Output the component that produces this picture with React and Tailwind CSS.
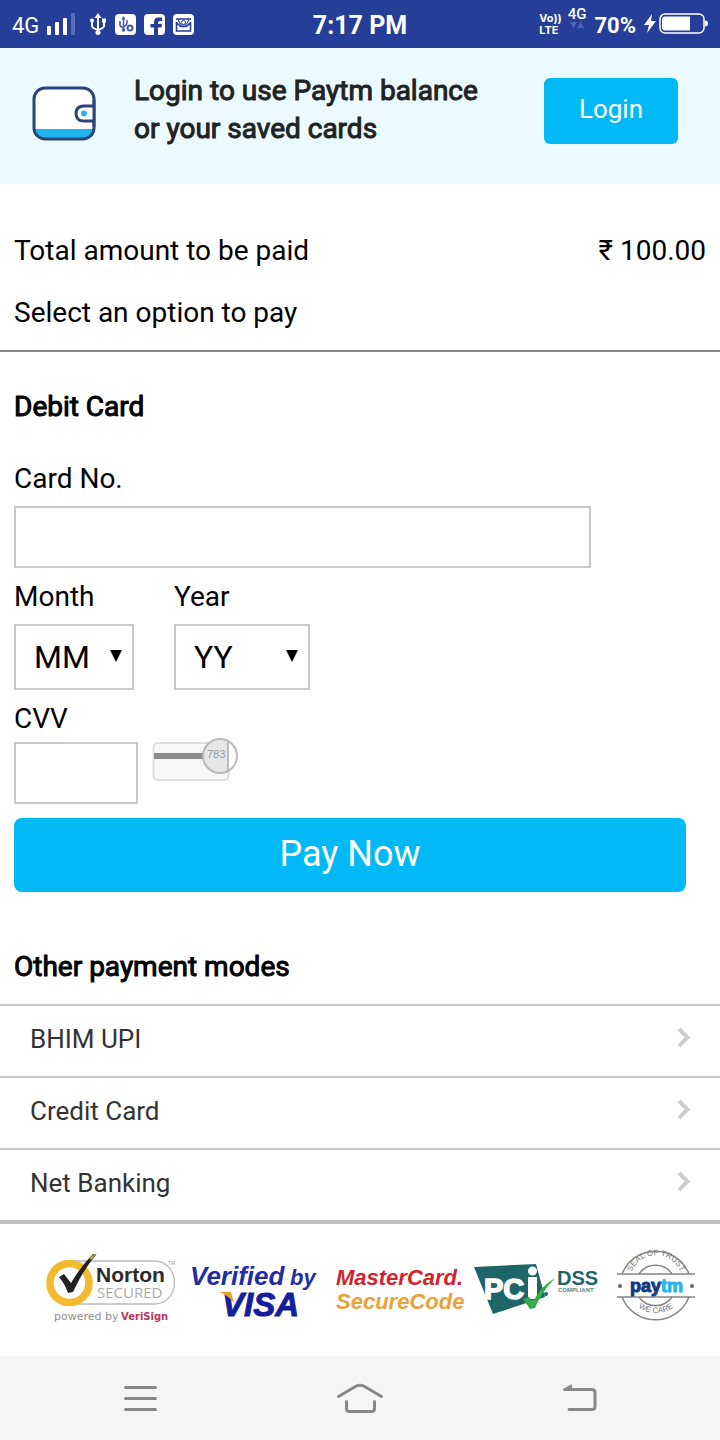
const paymentModes = ["BHIM UPI", "Credit Card", "Net Banking"];
const months = ["01", "02", "03", "04", "05", "06", "07", "08", "09", "10", "11", "12"];
const years = ["19", "20", "21", "22", "23", "24", "25", "26", "27", "28"];

function UsbIcon() {
  return (
    <svg width="18" height="22" viewBox="0 0 18 22" fill="none" stroke="#fff" strokeWidth="2" aria-hidden="true">
      <path d="M9 4v15M3 9v4q0 2 6 4M15 8v5q0 2-6 4" />
      <path d="M9 0l3.500 5h-7z" fill="#fff" stroke="none" />
      <circle cx="3" cy="7.500" r="2" fill="#fff" stroke="none" />
      <path d="M13 5.500h4v4h-4z" fill="#fff" stroke="none" />
      <circle cx="9" cy="19.500" r="2.500" fill="#fff" stroke="none" />
    </svg>
  );
}

function StatusBar() {
  return (
    <header className="grid h-12 grid-cols-[1fr_auto_1fr] items-center bg-[#263e98] text-white">
      <div className="flex items-center pl-3">
        <span className="pt-1 text-[22px] leading-6">4G</span>
        <svg className="ml-2" width="28" height="24" viewBox="0 0 28 24" fill="#fff" aria-hidden="true">
          <rect x="0" y="14" width="4" height="9" rx="1" />
          <rect x="8" y="10" width="4" height="13" rx="1" />
          <rect x="16" y="6" width="4" height="17" rx="1" />
          <rect x="24" y="1" width="4" height="22" rx="1" fill="#5a6cb4" />
        </svg>
        <div className="ml-3.5 flex items-center gap-2">
          <UsbIcon />
          <svg width="21" height="21" viewBox="0 0 21 21" aria-hidden="true">
            <rect width="21" height="21" rx="4" fill="#fff" />
            <g fill="none" stroke="#4a5ba8" strokeWidth="1.500">
              <path d="M8.500 4v12M5 7v4q0 2 3.500 2.500M12 6v3q0 2-3.500 4" />
              <circle cx="15" cy="14" r="2.500" strokeWidth="2" />
            </g>
            <path d="M8.500 2l2.200 3.500h-4.400z" fill="#4a5ba8" />
            <circle cx="8.500" cy="16" r="1.800" fill="#4a5ba8" />
          </svg>
          <svg width="21" height="21" viewBox="0 0 21 21" aria-hidden="true">
            <rect width="21" height="21" rx="4" fill="#fff" />
            <path d="M10 21v-7.500H6.500V10H10V8Q10 3.500 14.500 3.500H18V7h-2q-2 0-2 2v1h4l-.6 3.500H14V21z" fill="#263e98" />
          </svg>
          <svg width="21" height="21" viewBox="0 0 21 21" aria-hidden="true">
            <rect width="21" height="21" rx="4" fill="#fff" />
            <g fill="none" stroke="#263e98" strokeWidth="1.600">
              <path d="M3.500 8v9h14V8M3.500 8.500l4 4h6l4-4M3 5h15" />
              <path d="M5 5.500l3 5.500h5l3-5.500" strokeWidth="1.200" />
              <circle cx="10.500" cy="8.500" r="2" strokeWidth="1" />
            </g>
          </svg>
        </div>
      </div>
      <time className="pt-1 text-[25px] font-bold leading-8">7:17 PM</time>
      <div className="flex items-center justify-end pr-3">
        <span className="grid font-[Inter,sans-serif] text-[11px] font-bold leading-3">
          <span>Vo))</span>
          <span>LTE</span>
        </span>
        <span className="ml-1.5 grid justify-items-center gap-0.5 pb-3 text-[15px] font-medium leading-3">
          4G
          <svg width="14" height="6" viewBox="0 0 14 6" fill="#5264b0" aria-hidden="true">
            <path d="M0 0h7L3.500 6zM7 6h7L10.500 0z" />
          </svg>
        </span>
        <span className="ml-2 pt-1 text-[22px] font-bold leading-8">70%</span>
        <svg className="ml-2" width="64" height="22" viewBox="0 0 64 22" aria-hidden="true">
          <path d="M8 1L0 12h5L3 20l9-12H7z" fill="#fff" />
          <rect x="16" y="1" width="44" height="19" rx="5" fill="none" stroke="#fff" strokeWidth="1.500" />
          <path d="M21 3.500h25v14H21q-3 0-3-3v-8q0-3 3-3z" fill="#fff" />
          <path d="M61 7.500q3 0 3 3t-3 3z" fill="#fff" />
        </svg>
      </div>
    </header>
  );
}

function WalletIcon() {
  return (
    <svg width="64" height="56" viewBox="0 0 64 56" aria-hidden="true">
      <rect x="2" y="2" width="60" height="51" rx="11" fill="#fff" />
      <path d="M3 43h58q-1 10-10 10H13q-9 0-10-10z" fill="#1cb4ec" />
      <rect x="2" y="2" width="60" height="51" rx="11" fill="none" stroke="#2c4478" strokeWidth="3" />
      <path d="M62 20H52q-8 0-8 7.500t8 7.500h10" fill="#fff" stroke="#2c4478" strokeWidth="3" />
      <path d="M62 14v27" stroke="#2c4478" strokeWidth="3" />
      <circle cx="52" cy="27.500" r="3" fill="#28b5ed" />
    </svg>
  );
}

function CvvCard() {
  return (
    <svg className="-mt-1.5" width="88" height="46" viewBox="0 0 88 46" role="img" aria-label="Security code on the back of the card">
      <rect x="1.500" y="7" width="75" height="37" rx="4" fill="#f7f7f7" stroke="#dedede" strokeWidth="2" />
      <path d="M2 17h54v6H2z" fill="#8c8c8c" />
      <circle cx="68" cy="20" r="17" fill="#fff" />
      <path d="M76 5v30A17 17 0 1 1 76 5z" fill="#e6e6e6" />
      <path d="M76 5v30" stroke="#bcbcbc" strokeWidth="2" />
      <circle cx="68" cy="20" r="17" fill="none" stroke="#bababa" strokeWidth="2" />
      <text x="55" y="22" fontFamily="Liberation Sans, sans-serif" fontSize="11" fill="#999">783</text>
    </svg>
  );
}

function NortonLogo() {
  return (
    <svg className="overflow-visible" width="134" height="76" viewBox="44 1248 134 76" role="img" aria-label="Norton Secured">
      <path d="M72 1261h83a19 21 0 0 1 0 43H72" fill="#fff" stroke="#bbb" strokeWidth="1.300" />
      <circle cx="69.500" cy="1283" r="19.500" fill="#fff" stroke="#f3ba2f" strokeWidth="7.500" />
      <path d="M59 1277l5-3 7 9q10-17 22-29l3 1q-13 15-23 37l-5 1q-3-9-9-16z" fill="#222" />
      <path d="M88 1258l9-5-5 7z" fill="#b99a4a" />
      <text x="96" y="1282" fontFamily="Liberation Sans, sans-serif" fontSize="21" fontWeight="700" fill="#2b2b2b">Norton</text>
      <text x="97" y="1298" fontFamily="Open Sans, sans-serif" fontSize="15" fill="#aaa">SECURED</text>
      <text x="54" y="1320" fontFamily="DejaVu Sans, sans-serif" fontSize="11" fill="#8e8e8e">powered by</text>
      <text x="121" y="1320" fontFamily="DejaVu Sans, sans-serif" fontSize="10" fontWeight="700" fill="#b73562">VeriSign</text>
      <text x="168" y="1265" fontFamily="Open Sans, sans-serif" fontSize="5" fill="#999">TM</text>
    </svg>
  );
}

function VisaLogo() {
  return (
    <svg className="overflow-visible" width="128" height="76" viewBox="190 1248 128 76" role="img" aria-label="Verified by Visa">
      <g fontFamily="Liberation Sans, sans-serif" fontStyle="italic" fontWeight="700" fill="#1f2ea5">
        <text x="190" y="1285" fontSize="26">Verified</text>
        <text x="290" y="1285" fontSize="22">by</text>
        <text x="222" y="1316" fontSize="33" fill="#151f9c" stroke="#151f9c">VISA</text>
      </g>
      <path d="M219 1292h12l3 11q-6-8-15-11z" fill="#f0a02e" />
    </svg>
  );
}

function MasterCardLogo() {
  return (
    <svg className="overflow-visible" width="132" height="76" viewBox="330 1248 132 76" role="img" aria-label="MasterCard SecureCode">
      <g fontFamily="Liberation Sans, sans-serif" fontStyle="italic" fontWeight="700" fontSize="22">
        <text x="336" y="1285" fill="#d2232e">MasterCard.</text>
        <text x="336" y="1309" fill="#e9a13a">SecureCode</text>
      </g>
      <circle cx="460" cy="1308" r="1" fill="#e9a13a" />
    </svg>
  );
}

function PciLogo() {
  return (
    <svg className="overflow-visible" width="128" height="76" viewBox="474 1248 128 76" role="img" aria-label="PCI DSS Compliant">
      <path d="M474 1267l62-3 9 33-52 17z" fill="#1d6569" />
      <text x="484" y="1299" fontFamily="Liberation Sans, sans-serif" fontSize="29" fontWeight="700" fill="#fff" stroke="#fff" strokeWidth="1.500">PC</text>
      <path d="M528 1277h9v22h-9z" fill="#fff" />
      <circle cx="532.500" cy="1271" r="4.500" fill="#fff" />
      <path d="M523 1299l6-2 4 5q7-15 22-24-14 15-20 30l-5 1z" fill="#35ab4b" />
      <circle cx="546" cy="1294" r="2" fill="#1d6569" />
      <text x="557" y="1285" fontFamily="Liberation Sans, sans-serif" fontSize="20" fontWeight="700" fill="#1d6569">DSS</text>
      <text x="558" y="1292" fontFamily="Liberation Sans, sans-serif" fontSize="6" fontWeight="700" fill="#55898c">COMPLIANT</text>
    </svg>
  );
}

function PaytmSeal() {
  return (
    <svg className="overflow-visible" width="84" height="76" viewBox="614 1248 84 76" role="img" aria-label="Paytm seal of trust">
      <g fill="none" stroke="#858585" strokeWidth="1.500">
        <path d="M617 1274h78M617 1297h78" />
        <path d="M622 1274a36 36 0 0 1 67 0M622 1297a36 36 0 0 0 67 0" />
        <path d="M639 1274a20 20 0 0 1 33 0M639 1297a20 20 0 0 0 33 0" />
      </g>
      <path id="seal-top" d="M631 1274a26 26 0 0 1 50 0" fill="none" />
      <path id="seal-bottom" d="M630 1298a30 30 0 0 0 52 0" fill="none" />
      <g fontFamily="Liberation Sans, sans-serif" fontSize="8" fill="#777">
        <text textAnchor="middle"><textPath href="#seal-top" startOffset="50%">SEAL OF TRUST</textPath></text>
        <text textAnchor="middle"><textPath href="#seal-bottom" startOffset="50%">WE CARE</textPath></text>
      </g>
      <circle cx="620" cy="1286" r="2" fill="#666" />
      <circle cx="692" cy="1286" r="2" fill="#666" />
      <text x="630" y="1292" fontFamily="Liberation Sans, sans-serif" fontSize="18" fontWeight="700" fill="#123c82" stroke="#123c82">
        pay<tspan fill="#25b5ed" stroke="#25b5ed">tm</tspan>
      </text>
    </svg>
  );
}

function DateSelect({ id, label, placeholder, options, className }) {
  return (
    <div className={className}>
      <label htmlFor={id} className="block">{label}</label>
      <div className="mt-2.5 grid items-center">
        <select
          id={id}
          className="col-start-1 row-start-1 h-[66px] w-full appearance-none border-2 border-[#c8c8c8] bg-white pl-[18px] text-[32px] leading-10"
        >
          <option>{placeholder}</option>
          {options.map((option) => (
            <option key={option}>{option}</option>
          ))}
        </select>
        <svg className="pointer-events-none col-start-1 row-start-1 mr-3 justify-self-end" width="12" height="14" viewBox="0 0 12 14" aria-hidden="true">
          <path d="M0 0h12L6 12z" />
        </svg>
      </div>
    </div>
  );
}

export default function App() {
  return (
    <div className="bg-white font-[Roboto,sans-serif] text-[28px] leading-[34px] text-black">
      <StatusBar />

      <section className="flex h-34 items-start bg-[#eafaff] pr-[42px] pl-8">
        <div className="mt-[38px]">
          <WalletIcon />
        </div>
        <p className="mt-6 ml-[38px] flex-1 leading-[38px] text-[#222] [-webkit-text-stroke:1px]">
          Login to use Paytm balance
          <br />
          or your saved cards
        </p>
        <button type="button" className="mt-[30px] h-[66px] w-[134px] rounded-md bg-[#00b9f5] pb-1 text-[26px] text-white">
          Login
        </button>
      </section>

      <main>
        <section className="border-b-2 border-[#888] px-3.5 pt-[50px] pb-5">
          <div className="flex justify-between">
            <span>Total amount to be paid</span>
            <span>₹ 100.00</span>
          </div>
          <p className="mt-7">Select an option to pay</p>
        </section>

        <form className="px-3.5 pt-[38px]" onSubmit={(event) => event.preventDefault()}>
          <h2 className="[-webkit-text-stroke:1px]">Debit Card</h2>
          <label htmlFor="card-number" className="mt-[38px] block">Card No.</label>
          <input id="card-number" type="text" inputMode="numeric" className="mt-2.5 block h-[62px] w-5/6 border-2 border-[#c8c8c8] px-4" />
          <div className="mt-3 flex gap-10">
            <DateSelect id="month" label="Month" placeholder="MM" options={months} className="w-[120px]" />
            <DateSelect id="year" label="Year" placeholder="YY" options={years} className="w-[136px]" />
          </div>
          <label htmlFor="cvv" className="mt-3 block">CVV</label>
          <div className="mt-1.5 flex items-start gap-3.5">
            <input id="cvv" type="password" className="h-[62px] w-[124px] border-2 border-[#c8c8c8] px-4" />
            <CvvCard />
          </div>
          <div className="pr-5">
            <button type="submit" className="mt-3.5 h-[74px] w-full rounded-lg bg-[#00b9f5] pb-0.5 text-[36px] text-white">
              Pay Now
            </button>
          </div>
        </form>

        <section className="pt-[58px]">
          <h2 className="px-3.5 [-webkit-text-stroke:1px]">Other payment modes</h2>
          <ul className="mt-5 border-b-4 border-[#c0c0c0] text-[26px] text-[#333]">
            {paymentModes.map((mode) => (
              <li key={mode} className="border-t-2 border-[#c8c8c8]">
                <button type="button" className="flex h-[70px] w-full items-center justify-between pr-[29px] pb-1 pl-[30px]">
                  {mode}
                  <svg width="14" height="24" viewBox="0 0 14 24" fill="none" stroke="#cdcdcd" strokeWidth="4" aria-hidden="true">
                    <path d="M2 2l8.500 8.500L2 19" />
                  </svg>
                </button>
              </li>
            ))}
          </ul>
        </section>
      </main>

      <footer>
        <div className="flex flex-wrap gap-3 pt-6 pr-[22px] pb-8 pl-11">
          <NortonLogo />
          <VisaLogo />
          <MasterCardLogo />
          <PciLogo />
          <PaytmSeal />
        </div>
        <nav className="flex h-21 items-center justify-between bg-[#f5f5f5] px-[122px]" aria-label="System navigation">
          <button type="button" aria-label="Recent apps">
            <svg width="36" height="32" viewBox="0 0 36 32" fill="none" stroke="#888" strokeWidth="3" strokeLinecap="round">
              <path d="M3.500 5.500h30M3.500 16.500h30M3.500 27.500h30" />
            </svg>
          </button>
          <button type="button" aria-label="Home">
            <svg width="48" height="32" viewBox="0 0 48 32" fill="none" stroke="#888" strokeWidth="3" strokeLinecap="round" strokeLinejoin="round">
              <path d="M2.500 14.500l17-10q4.500-2.500 9 0l17 10M10.500 19.500v7q0 3 3 3h22q3 0 3-3v-7" />
            </svg>
          </button>
          <button type="button" aria-label="Back">
            <svg width="36" height="32" viewBox="0 0 36 32" fill="none" stroke="#888" strokeWidth="3" strokeLinecap="round" strokeLinejoin="round">
              <path d="M3 7.500h27q3 0 3 3v14q0 3-3 3H7" />
              <path d="M2 7.500l7-4v4z" fill="#888" strokeWidth="2" />
            </svg>
          </button>
        </nav>
      </footer>
    </div>
  );
}
